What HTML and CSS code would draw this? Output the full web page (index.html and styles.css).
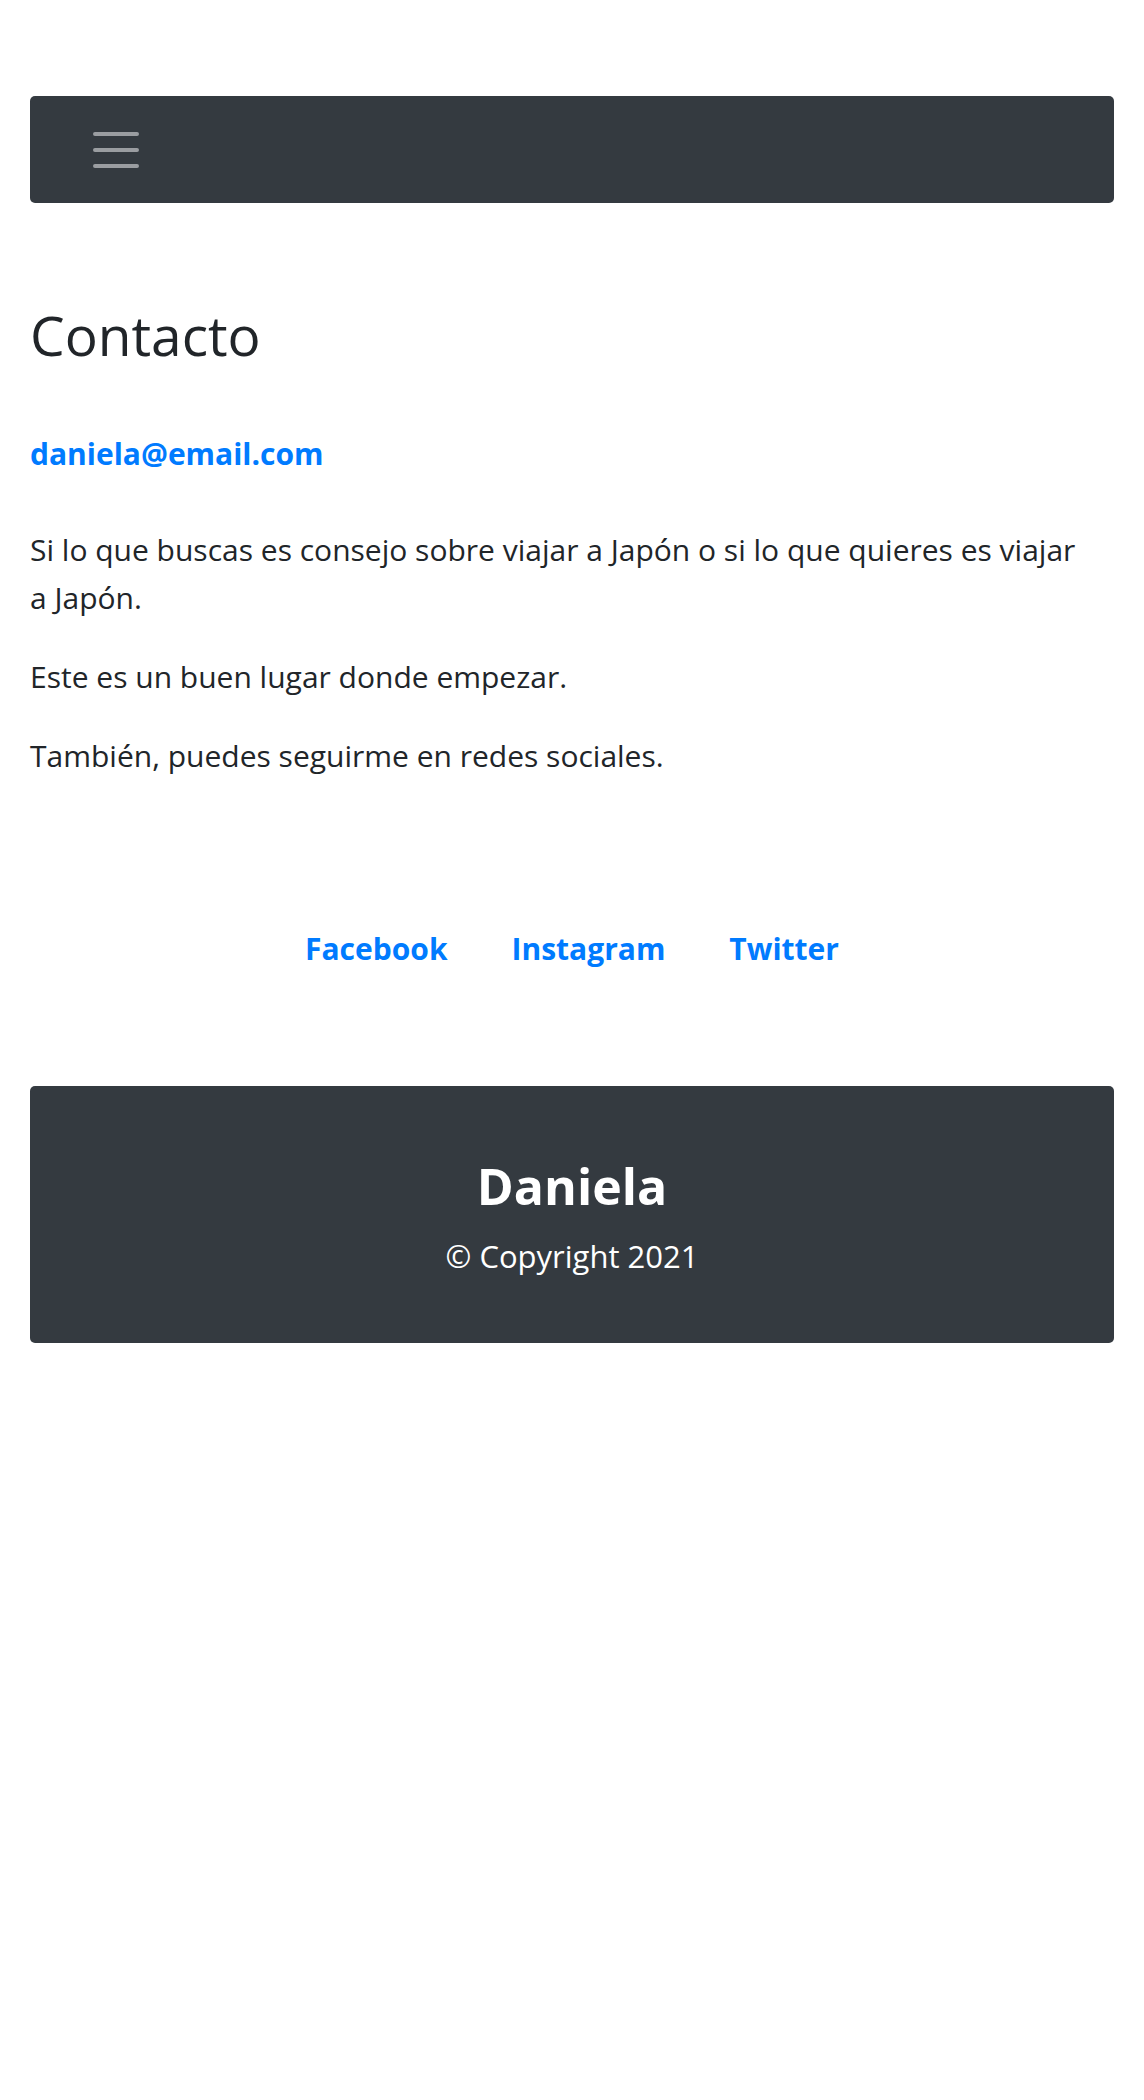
FILE: index.html
```html
<!DOCTYPE html>
<html lang="es">
<head>
<meta charset="utf-8">
<title>Contacto</title>
<link rel="stylesheet" href="styles.css">
</head>
<body>
<div class="container">
  <nav class="navbar">
    <button class="toggler" aria-label="Menú">
      <svg width="48" height="48" viewBox="0 0 48 48" aria-hidden="true">
        <path d="M3 8h42M3 24h42M3 40h42" stroke="#9a9da1" stroke-width="4" stroke-linecap="round" fill="none"/>
      </svg>
    </button>
  </nav>

  <main class="content">
    <h1 class="title">Contacto</h1>
    <p class="email"><a href="#">daniela@email.com</a></p>
    <p class="text">Si lo que buscas es consejo sobre viajar a Japón o si lo que quieres es viajar a&nbsp;Japón.</p>
    <p class="text">Este es un buen lugar donde empezar.</p>
    <p class="text">También, puedes seguirme en redes sociales.</p>
  </main>

  <ul class="social">
    <li><a href="#">Facebook</a></li>
    <li><a href="#">Instagram</a></li>
    <li><a href="#">Twitter</a></li>
  </ul>

  <footer class="footer">
    <h2 class="footer-name">Daniela</h2>
    <p class="footer-copy">© Copyright 2021</p>
  </footer>
</div>
</body>
</html>
```

FILE: styles.css
```css
html, body {
  margin: 0;
  padding: 0;
  background: #ffffff;
}

body {
  font-family: "Open Sans", "Noto Sans", sans-serif;
  color: #212529;
  font-size: 30px;
  line-height: 48px;
}

a {
  color: #007bff;
  text-decoration: none;
}

.container {
  width: 1084px;
  margin: 0 auto;
  padding-top: 96px;
}

.navbar {
  height: 107px;
  background: #343a40;
  border-radius: 5px;
  display: flex;
  align-items: center;
  padding-left: 62px;
}

.toggler {
  display: block;
  width: 48px;
  height: 48px;
  padding: 0;
  border: 0;
  background: transparent;
  cursor: pointer;
}

.toggler svg {
  display: block;
}

.content {
  padding-top: 99px;
}

.title {
  margin: 0 0 62px;
  font-size: 55px;
  line-height: 66px;
  font-weight: 400;
}

.email {
  margin: 0 0 48px;
  font-weight: 700;
}

.text {
  margin: 0 0 31px;
}

.text:last-child {
  margin-bottom: 0;
}

.social {
  list-style: none;
  margin: 145px 0 0;
  padding: 0;
  display: flex;
  justify-content: center;
  gap: 64px;
  font-size: 30px;
  font-weight: 700;
}

.footer {
  margin-top: 113px;
  background: #343a40;
  border-radius: 5px;
  color: #ffffff;
  text-align: center;
  padding: 70px 0 63px;
}

.footer-name {
  margin: 0 0 16px;
  font-size: 50px;
  line-height: 60px;
  font-weight: 700;
}

.footer-copy {
  margin: 0;
  font-size: 31px;
}
```
